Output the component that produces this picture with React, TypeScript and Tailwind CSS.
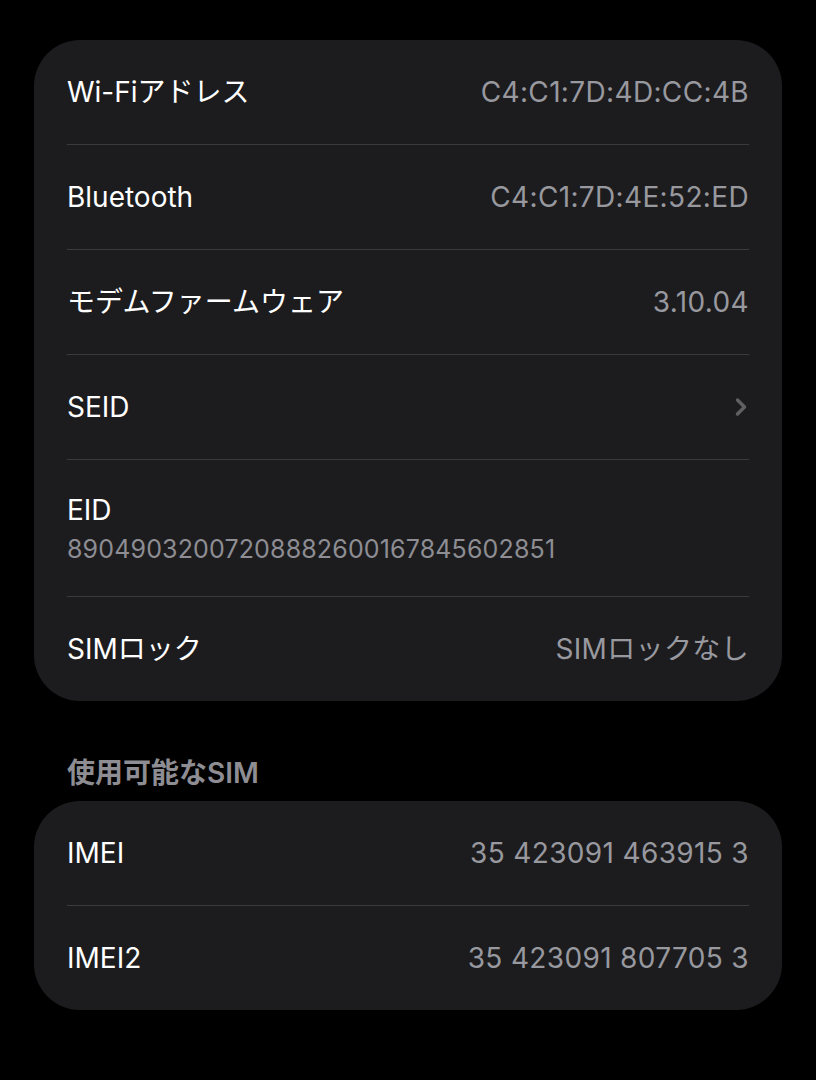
import { ChevronRight } from 'lucide-react';

type Row = {
  label: string;
  value?: string;
  chevron?: boolean;
  sub?: string;
};

const mainRows: Row[] = [
  { label: 'Wi-Fiアドレス', value: 'C4:C1:7D:4D:CC:4B' },
  { label: 'Bluetooth', value: 'C4:C1:7D:4E:52:ED' },
  { label: 'モデムファームウェア', value: '3.10.04' },
  { label: 'SEID', chevron: true },
  { label: 'EID', sub: '89049032007208882600167845602851' },
  { label: 'SIMロック', value: 'SIMロックなし' },
];

const simRows: Row[] = [
  { label: 'IMEI', value: '35 423091 463915 3' },
  { label: 'IMEI2', value: '35 423091 807705 3' },
];

function Card({ rows }: { rows: Row[] }) {
  return (
    <div className="rounded-[46px] bg-[#1c1c1e] px-[33px]">
      {rows.map((row, i) => (
        <div
          key={row.label}
          className={i < rows.length - 1 ? 'border-b border-[#3a3a3c]' : ''}
        >
          {row.sub ? (
            <div className="flex h-[136px] flex-col justify-center">
              <span className="text-[28px] leading-[34px] text-white">{row.label}</span>
              <span className="mt-[7px] text-[25px] leading-[30px] tracking-[0.15px] text-[#8d8d93]">
                {row.sub}
              </span>
            </div>
          ) : (
            <div className="flex h-[104px] items-center justify-between">
              <span className="text-[28px] text-white">{row.label}</span>
              {row.value && (
                <span className="text-[28px] tracking-[0.35px] text-[#98989f]">{row.value}</span>
              )}
              {row.chevron && (
                <ChevronRight className="-mr-[6px] h-[28px] w-[28px] text-[#5f5f64]" strokeWidth={3} />
              )}
            </div>
          )}
        </div>
      ))}
    </div>
  );
}

export default function App() {
  return (
    <div
      className="min-h-[1080px] bg-black px-[34px] pt-[40px]"
      style={{ fontFamily: 'Inter, "Noto Sans CJK JP", sans-serif' }}
    >
      <Card rows={mainRows} />
      <div className="px-[33px] pb-[12px] pt-[56px] text-[28px] font-semibold leading-[32px] text-[#8d8d93]">
        使用可能なSIM
      </div>
      <Card rows={simRows} />
    </div>
  );
}
